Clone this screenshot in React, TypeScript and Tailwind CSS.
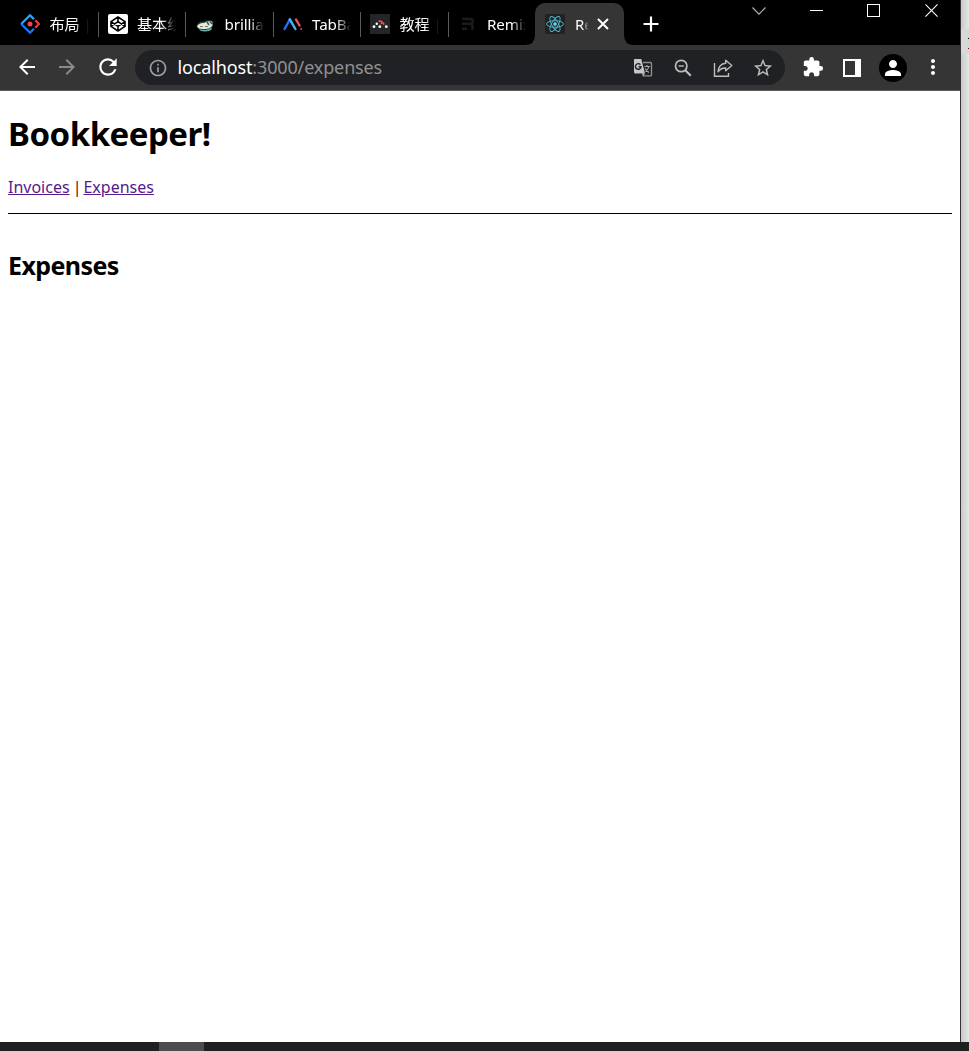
import type { ReactNode } from "react";
import {
  MdArrowBack,
  MdArrowForward,
  MdExtension,
  MdInfoOutline,
  MdMoreVert,
  MdPerson,
  MdRefresh,
  MdStarBorder,
} from "react-icons/md";

function JuejinIcon() {
  return (
    <svg viewBox="0 0 20 20" className="size-5" fill="none" strokeWidth="2.3" strokeLinejoin="round">
      <path d="M14 5.2 10 1.2 1.2 10" stroke="#2aa5fb" />
      <path d="M1.2 10 10 18.8l4-4" stroke="#1677ff" />
      <path d="m15.2 6.2 3.7 3.8-3.7 3.8" stroke="#f5323d" />
      <circle cx="10" cy="10" r="2.5" fill="#f04654" />
    </svg>
  );
}

function CodepenIcon() {
  return (
    <svg viewBox="0 0 20 20" className="size-5" fill="none" stroke="#000" strokeWidth="1.6" strokeLinejoin="round">
      <rect width="20" height="20" rx="2" fill="#fff" stroke="none" />
      <path d="m10 3 7 4.6v4.8L10 17l-7-4.6V7.6L10 3Zm0 0v4.6m0 4.8V17M3 7.6l7 4.8 7-4.8M3 12.4l7-4.8 7 4.8" />
    </svg>
  );
}

function SushiIcon() {
  return (
    <svg viewBox="0 0 20 20" className="size-5">
      <path d="M1.5 12Q3 7 9 7.5 14 5 18.5 7.5L17 15q-7 3.5-13.500 0Z" fill="#29423f" />
      <path d="M4 15q7 2.500 12-1l1 1q-2 2.500-7 2.500-5 0-6-2.500Z" fill="#64aaa9" />
      <path d="M2 12.500Q4 8.500 9 9q4-2.500 8-1.500l.5 4q-3 4-9 3.500Q3 15 2 12.500Z" fill="#e7e9dc" />
      <path d="m12 8 2 3m1-3.500 2 2.500" stroke="#345c4f" strokeWidth="1.5" />
      <path d="M5 12.500h3m2 0h3" stroke="#777b62" strokeWidth="1.200" />
    </svg>
  );
}

function TabBarIcon() {
  return (
    <svg viewBox="0 0 20 20" className="size-5" fill="none" strokeWidth="2.4" strokeLinecap="round">
      <path d="m1.6 15 5.2-9.5" stroke="#1677ff" />
      <path d="M6.8 5.3 12.4 15" stroke="#42b8f8" />
      <path d="m13 5.500 3.500 6" stroke="#f5515f" />
      <circle cx="18" cy="15" r=".5" stroke="#f5515f" strokeWidth="1" />
    </svg>
  );
}

function RouterIcon() {
  return (
    <svg viewBox="0 0 20 20" className="size-5">
      <rect width="20" height="20" fill="#242526" />
      <g fill="#fff">
        <circle cx="4" cy="12.7" r="1.4" />
        <circle cx="6.8" cy="9.7" r="1.2" />
        <circle cx="9.8" cy="12.7" r="1.4" />
        <circle cx="16.3" cy="12.7" r="1.4" />
      </g>
      <path d="M9.300 7.200q3.200-.3 2.600 1.800 1.600-.4 1.700 1" stroke="#f44250" strokeWidth="2" strokeLinecap="round" fill="none" />
    </svg>
  );
}

function RemixIcon() {
  return (
    <svg viewBox="0 0 20 20" className="size-5" fill="none" stroke="#1b1b1b" strokeWidth="2.5">
      <path d="M4 5h8.5q2.300 0 2.300 2.300T12.500 9.800H4m8 0q2.500 0 2.500 3V16M4 14.700h5" />
    </svg>
  );
}

function ReactIcon() {
  return (
    <svg viewBox="0 0 20 20" className="size-5" fill="none" stroke="#53b9d3" strokeWidth=".9">
      <rect width="20" height="20" rx="2" fill="#222222" stroke="none" />
      <ellipse cx="10" cy="10" rx="8.5" ry="3.3" />
      <ellipse cx="10" cy="10" rx="8.5" ry="3.3" transform="rotate(60 10 10)" />
      <ellipse cx="10" cy="10" rx="8.5" ry="3.3" transform="rotate(120 10 10)" />
      <circle cx="10" cy="10" r="1.5" fill="#61dafb" />
    </svg>
  );
}

const tabs: { title: string; icon: ReactNode }[] = [
  { title: "布局 |", icon: <JuejinIcon /> },
  { title: "基本组", icon: <CodepenIcon /> },
  { title: "brillia", icon: <SushiIcon /> },
  { title: "TabBa", icon: <TabBarIcon /> },
  { title: "教程 |", icon: <RouterIcon /> },
  { title: "Remix", icon: <RemixIcon /> },
];

function TabStrip() {
  return (
    <div className="flex h-[45px] bg-black pl-[10px] text-white">
      {tabs.map((tab, i) => (
        <div key={tab.title} className="relative flex w-[87.5px] shrink-0 items-center pt-[3px] pl-[10px]">
          {tab.icon}
          <span className="ml-[9.5px] w-[39px] overflow-hidden text-[15.2px] leading-6 tracking-[-0.1px] whitespace-nowrap [mask-image:linear-gradient(to_right,black_62%,transparent)]">
            {tab.title}
          </span>
          {i < 5 && <span className="absolute top-3 right-[-1px] h-[25px] w-px bg-[#5a5a5a]" />}
        </div>
      ))}
      <div className="relative mt-[3px] flex h-[42px] w-[89px] shrink-0 items-center rounded-t-[10px] bg-[#353535] pl-2.5">
        <svg viewBox="0 0 10 10" className="absolute bottom-0 -left-2.5 size-2.5" fill="#353535">
          <path d="M10 0v10H0Q10 10 10 0Z" />
        </svg>
        <svg viewBox="0 0 10 10" className="absolute -right-2.5 bottom-0 size-2.5" fill="#353535">
          <path d="M0 0v10h10Q0 10 0 0Z" />
        </svg>
        <ReactIcon />
        <span className="ml-2.5 w-[14px] overflow-hidden text-[15px] leading-6 whitespace-nowrap [mask-image:linear-gradient(to_right,black_50%,transparent)]">
          Re
        </span>
        <svg viewBox="0 0 12 12" className="ml-2 size-3" stroke="#fff" strokeWidth="2">
          <path d="m1 1 10 10M11 1 1 11" />
        </svg>
      </div>
      <svg viewBox="0 0 16 16" className="mt-4 ml-[19px] size-4" stroke="#fff" strokeWidth="2.2">
        <path d="M8 .5v15M.5 8h15" />
      </svg>
      <div className="ml-[93px] flex">
        <svg viewBox="0 0 14 8" className="mt-[7px] h-2 w-3.5" fill="none" stroke="#b5b5b5" strokeWidth="1.1">
          <path d="m.5.5 6.5 6.7L13.5.5" />
        </svg>
        <span className="mt-2.5 ml-11 h-px w-[13px] bg-white" />
        <span className="mt-1 ml-11 size-[13px] border border-white" />
        <svg viewBox="0 0 14 14" className="mt-1 ml-[45px] size-[13px]" stroke="#fff" strokeWidth="1.2">
          <path d="m.5.5 13 13M13.5.5l-13 13" />
        </svg>
      </div>
    </div>
  );
}

function TranslateIcon() {
  return (
    <svg viewBox="0 0 20 20" className="size-5" fill="none">
      <path d="M10 4.500h7.600q.9 0 .9.900v11.500q0 .9-.9.900H9.500" stroke="#8f9194" strokeWidth="1.300" />
      <path d="M1.500 1h6.800L12 15.500H2.500Q1 15.500 1 14V2q0-1 .5-1Z" fill="#c4c6c9" />
      <path d="m9 15.500 3 0-2 2.500Z" fill="#c4c6c9" />
      <path d="M7.400 6.700A2.800 2.800 0 1 0 8 8.800H5.500" stroke="#202124" strokeWidth="1.400" />
      <path d="M11.500 8.500h5.500M14 7v1.500m1.800 0q-.6 3-3.300 5m-.5-3q1.500 2.500 4 4" stroke="#a5a7aa" strokeWidth="1.100" />
    </svg>
  );
}

function ZoomOutIcon() {
  return (
    <svg viewBox="0 0 18 18" className="size-[18px]" fill="none" stroke="#bdbdbd" strokeWidth="1.700">
      <circle cx="7.200" cy="7" r="5.700" />
      <path d="M4.500 7h5.400" strokeWidth="1.400" />
      <path d="m11.300 11.200 5.500 5.500" strokeWidth="2.200" />
    </svg>
  );
}

function ShareIcon() {
  return (
    <svg viewBox="0 0 20 20" className="size-5" fill="none" stroke="#bdbdbd" strokeWidth="1.4">
      <path d="M1.500 5v13.300h14v-3.300" />
      <path d="M12.700 2.300 18.800 7.500l-6.100 5.300V10Q8 9.700 5 13.800 5.700 5.800 12.700 5.200Z" strokeLinejoin="round" />
    </svg>
  );
}

function Slot({ children }: { children: ReactNode }) {
  return <span className="flex w-10 shrink-0 items-center justify-center">{children}</span>;
}

function Toolbar() {
  return (
    <div className="flex h-[46px] items-center border-b border-[#5c5c5c] bg-[#353535] pl-[7px] text-white">
      <Slot><MdArrowBack size={24} className="-mt-px" /></Slot>
      <Slot><MdArrowForward size={24} color="#8a8a8a" className="-mt-px" /></Slot>
      <Slot><MdRefresh size={26} className="-mt-px ml-px" /></Slot>
      <div className="ml-2 flex h-[35px] w-[650px] shrink-0 items-center rounded-full bg-[#202124] text-[#bdbdbd]">
        <span className="ml-3 flex w-[21px] justify-center"><MdInfoOutline size={20} color="#9aa0a6" /></span>
        <span className="ml-[9.5px] flex-1 text-[18px] tracking-[-0.14px] text-[#919191]">
          <span className="text-white">localhost</span>:3000/expenses
        </span>
        <Slot><TranslateIcon /></Slot>
        <Slot><ZoomOutIcon /></Slot>
        <Slot><ShareIcon /></Slot>
        <Slot><MdStarBorder size={22} /></Slot>
        <span className="w-[2px]" />
      </div>
      <span className="w-[7px]" />
      <Slot><MdExtension size={22} className="ml-px -mt-px" /></Slot>
      <Slot>
        <span className="h-[18px] w-[18px] border-[2.5px] border-r-[6px] border-white" />
      </Slot>
      <Slot>
        <span className="ml-0.5 flex size-7 items-center justify-center rounded-full bg-black">
          <MdPerson size={24} />
        </span>
      </Slot>
      <Slot><MdMoreVert size={24} className="ml-px -mt-px" /></Slot>
    </div>
  );
}

function Page() {
  return (
    <main className="flex-1 bg-white px-2 text-black">
      <h1 className="pt-[19px] text-[33px] leading-[48px] font-bold tracking-[-0.5px]">Bookkeeper!</h1>
      <nav className="mt-[17px] h-[39px] border-b border-black text-[16px] leading-6 whitespace-pre text-[#800000]">
        <a href="#invoices" className="text-[#551a8b] underline">Invoices</a>
        <span className="tracking-[-1.1px]">{" | "}</span>
        <a href="#expenses" className="text-[#551a8b] underline">Expenses</a>
      </nav>
      <h2 className="mt-[33px] text-[25px] leading-9 font-bold tracking-[-0.6px]">Expenses</h2>
    </main>
  );
}

export default function App() {
  return (
    <div className="flex h-[1051px] w-[969px] flex-col overflow-hidden font-['Noto_Sans','Noto_Sans_CJK_SC',sans-serif]">
      <div className="flex h-[1042px]">
        <div className="flex w-[961px] shrink-0 flex-col border-r border-[#353535]">
          <TabStrip />
          <Toolbar />
          <Page />
        </div>
        <div className="w-2 bg-linear-to-r from-[#c9c9c9] to-[#e6e6e6]">
          <div className="mt-[29px] flex h-[25px] flex-col items-end bg-[#d8d8d8] pt-[9px]">
            <span className="h-px w-px bg-black" />
            <span className="mt-[9px] h-px w-px bg-[#800000]" />
          </div>
        </div>
      </div>
      <div className="h-[9px] bg-[#202020] pl-[159px]">
        <div className="h-full w-[45px] bg-[#4d4d4d]" />
      </div>
    </div>
  );
}
